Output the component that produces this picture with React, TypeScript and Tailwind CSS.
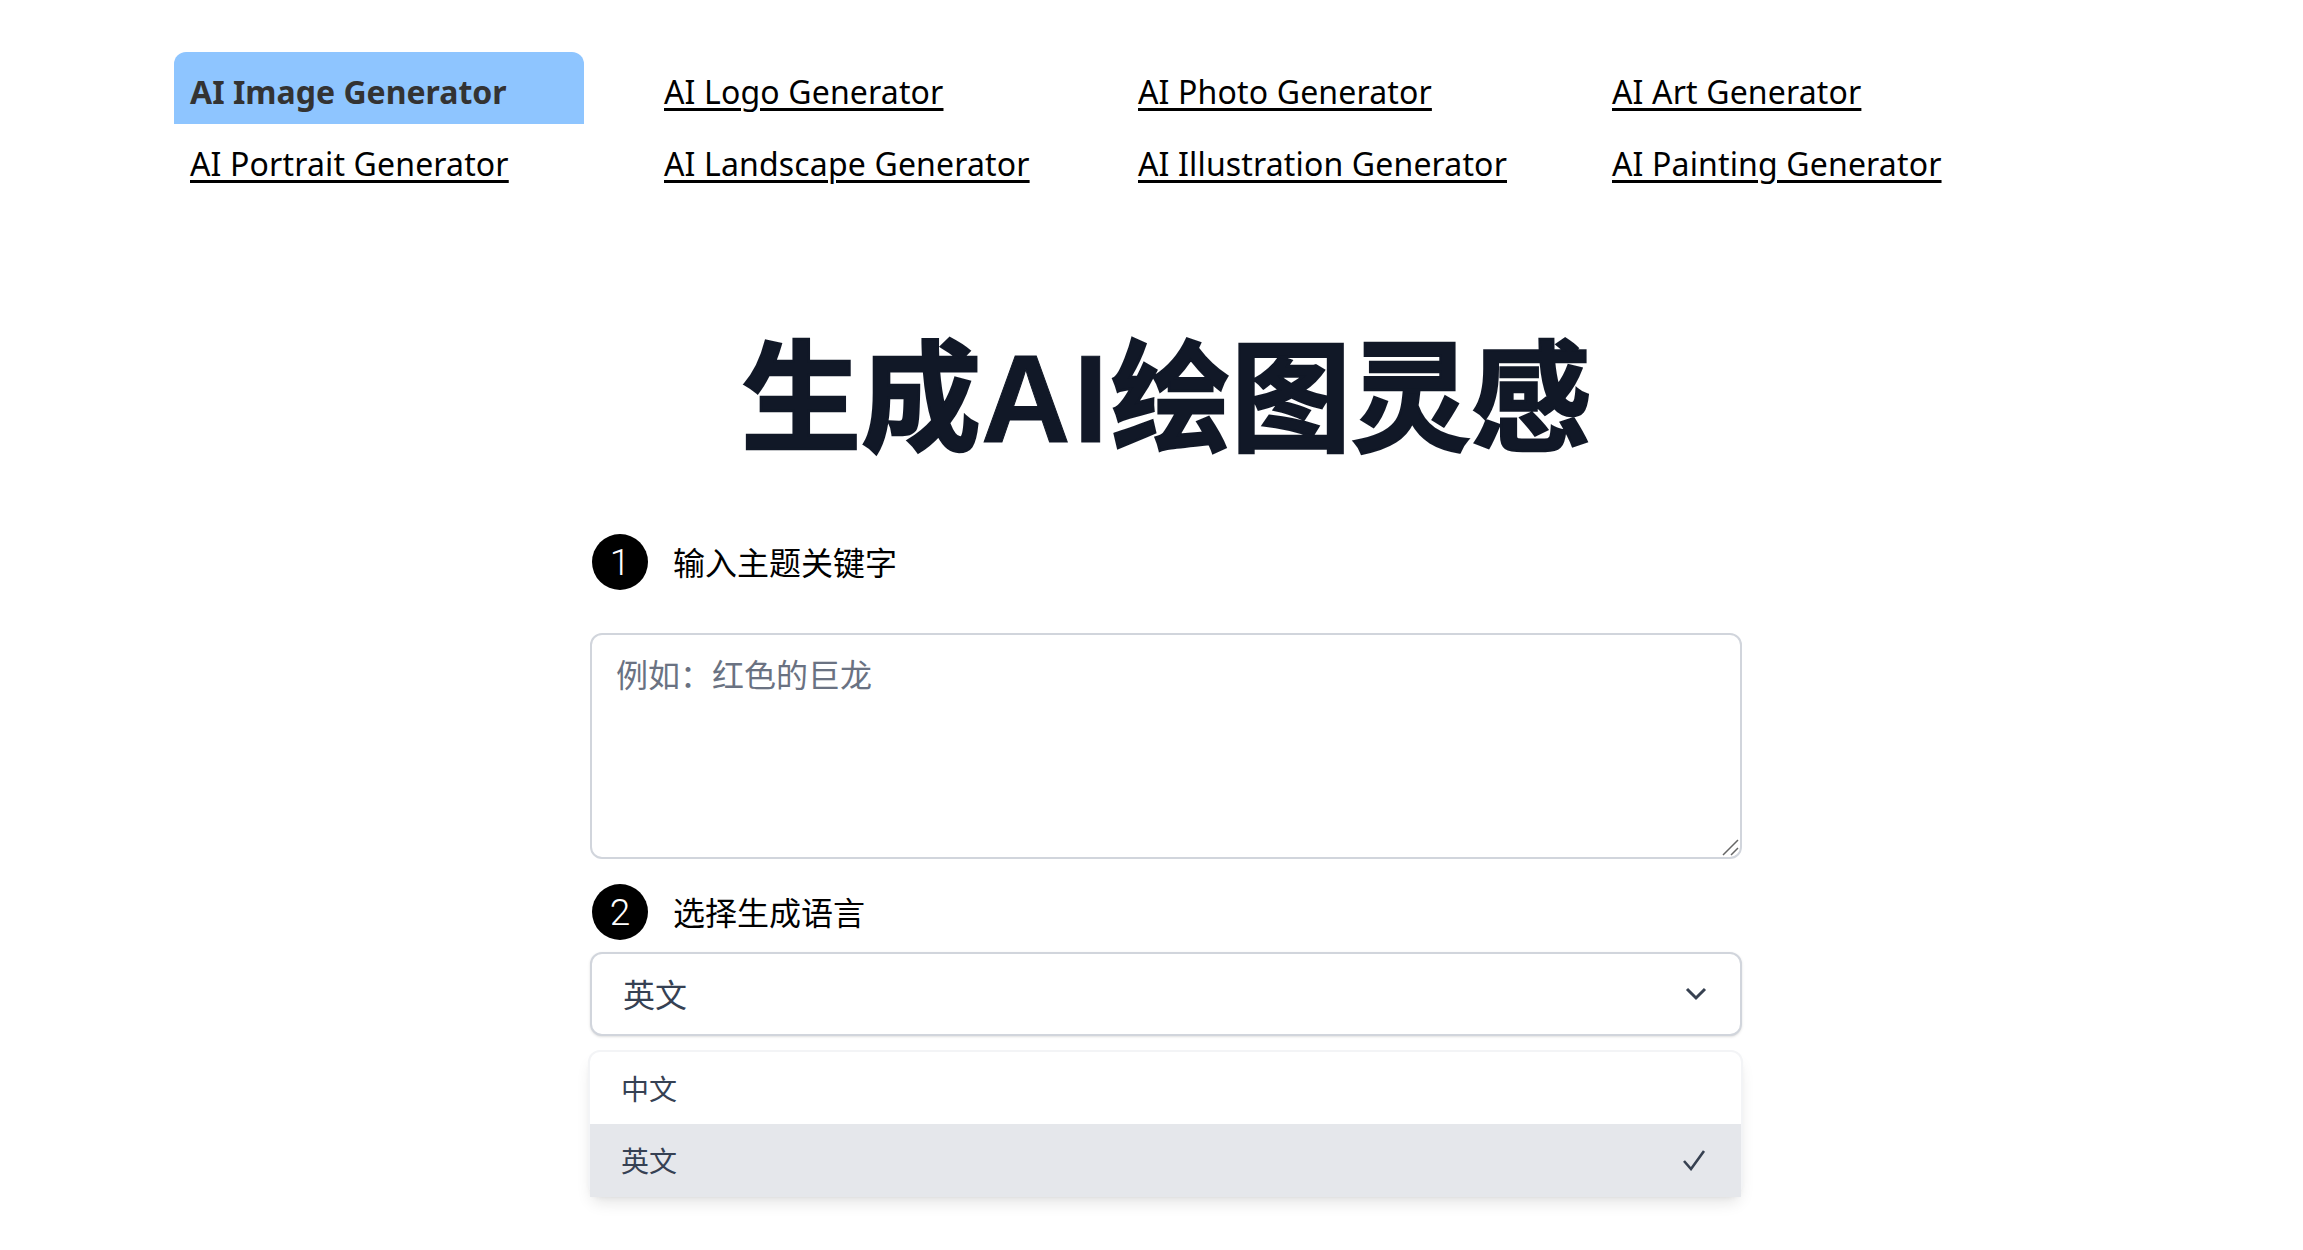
import React from "react";

const latin = "font-['Noto_Sans','Noto_Sans_CJK_SC',sans-serif]";
const cjk = "font-['Noto_Sans_CJK_SC',sans-serif]";

const links = [
  "AI Image Generator",
  "AI Logo Generator",
  "AI Photo Generator",
  "AI Art Generator",
  "AI Portrait Generator",
  "AI Landscape Generator",
  "AI Illustration Generator",
  "AI Painting Generator",
];

function Step({ n, label }: { n: number; label: string }) {
  return (
    <div className="flex items-center h-[56px]">
      <div className="w-[56px] h-[56px] ml-[2px] pt-[2px] rounded-full bg-black text-white flex items-center justify-center text-[37px] font-light font-['Roboto',sans-serif]">
        {n}
      </div>
      <span className={`ml-[25px] pb-[2px] text-[32px] leading-[48px] text-black ${cjk}`}>{label}</span>
    </div>
  );
}

export default function App() {
  return (
    <div className="min-h-[1250px] bg-white pt-[52px]">
      <nav className={`ml-[174px] w-[1832px] grid grid-cols-4 gap-x-[64px] ${latin}`}>
        {links.map((t, i) => (
          <a
            key={t}
            href="#"
            className={
              i === 0
                ? "h-[72px] flex items-center px-[16px] pt-[8px] text-[32px] font-bold text-[#333] bg-blue-300 rounded-t-[12px] whitespace-nowrap"
                : "h-[72px] flex items-center px-[16px] pt-[8px] text-[32px] text-black whitespace-nowrap"
            }
          >
            <span className={i === 0 ? "" : "underline decoration-[3px] underline-offset-[4px] tracking-[0.15px]"}>{t}</span>
          </a>
        ))}
      </nav>

      <h1 className={`mt-[134px] ml-[590px] w-[1152px] text-center text-[120px] leading-[120px] font-bold text-[#111827] [-webkit-text-stroke:2.5px_#111827] ${cjk}`}>
        生成<span className="font-['Liberation_Sans',sans-serif] text-[124px] tracking-[3px] [-webkit-text-stroke:1px_#111827]">AI</span>绘图灵感
      </h1>

      <div className="ml-[590px] w-[1152px] mt-[75px]">
        <Step n={1} label="输入主题关键字" />
        <div className="relative mt-[43px] h-[226px]">
          <textarea
            placeholder="例如：红色的巨龙"
            className={`block w-full h-full resize-none rounded-[12px] border-2 border-gray-300 px-[24px] pt-[14px] text-[32px] leading-[48px] bg-white placeholder:text-gray-500 outline-none ${cjk}`}
          />
          <svg className="absolute right-[2px] bottom-[2px] w-[18px] h-[18px]" viewBox="0 0 18 18" fill="none" stroke="#666" strokeWidth="1.5">
            <path d="M1 16 16 1M9 16 16 9" />
          </svg>
        </div>

        <div className="mt-[25px]">
          <Step n={2} label="选择生成语言" />
        </div>

        <div className="relative mt-[12px]">
          <div className={`h-[84px] rounded-[12px] border-2 border-gray-300 shadow-sm flex items-center justify-between pl-[31px] pr-[32px] text-[32px] text-gray-700 bg-white ${cjk}`}>
            <span className="pb-[3px]">英文</span>
            <svg className="w-[24px] h-[16px]" viewBox="0 0 24 16" fill="none" stroke="#374151" strokeWidth="3" strokeLinejoin="miter">
              <path d="M3 3 12 12 21 3" />
            </svg>
          </div>
          <div className={`absolute left-[-2px] right-[-1px] top-[98px] h-[146px] rounded-[12px] border-2 border-gray-100 bg-white shadow-lg text-[28px] text-gray-700 ${cjk}`}>
            <div className="h-[72px] flex items-center pl-[31px]">中文</div>
            <div className="h-[73px] flex items-center justify-between pl-[31px] pr-[35px] bg-gray-200">
              <span className="pb-[2px]">英文</span>
              <svg className="w-[24px] h-[22px] mb-[2px]" viewBox="0 0 24 22" fill="none" stroke="#374151" strokeWidth="2.6">
                <path d="M2 12 9 20 22 2" />
              </svg>
            </div>
          </div>
        </div>
      </div>
    </div>
  );
}
